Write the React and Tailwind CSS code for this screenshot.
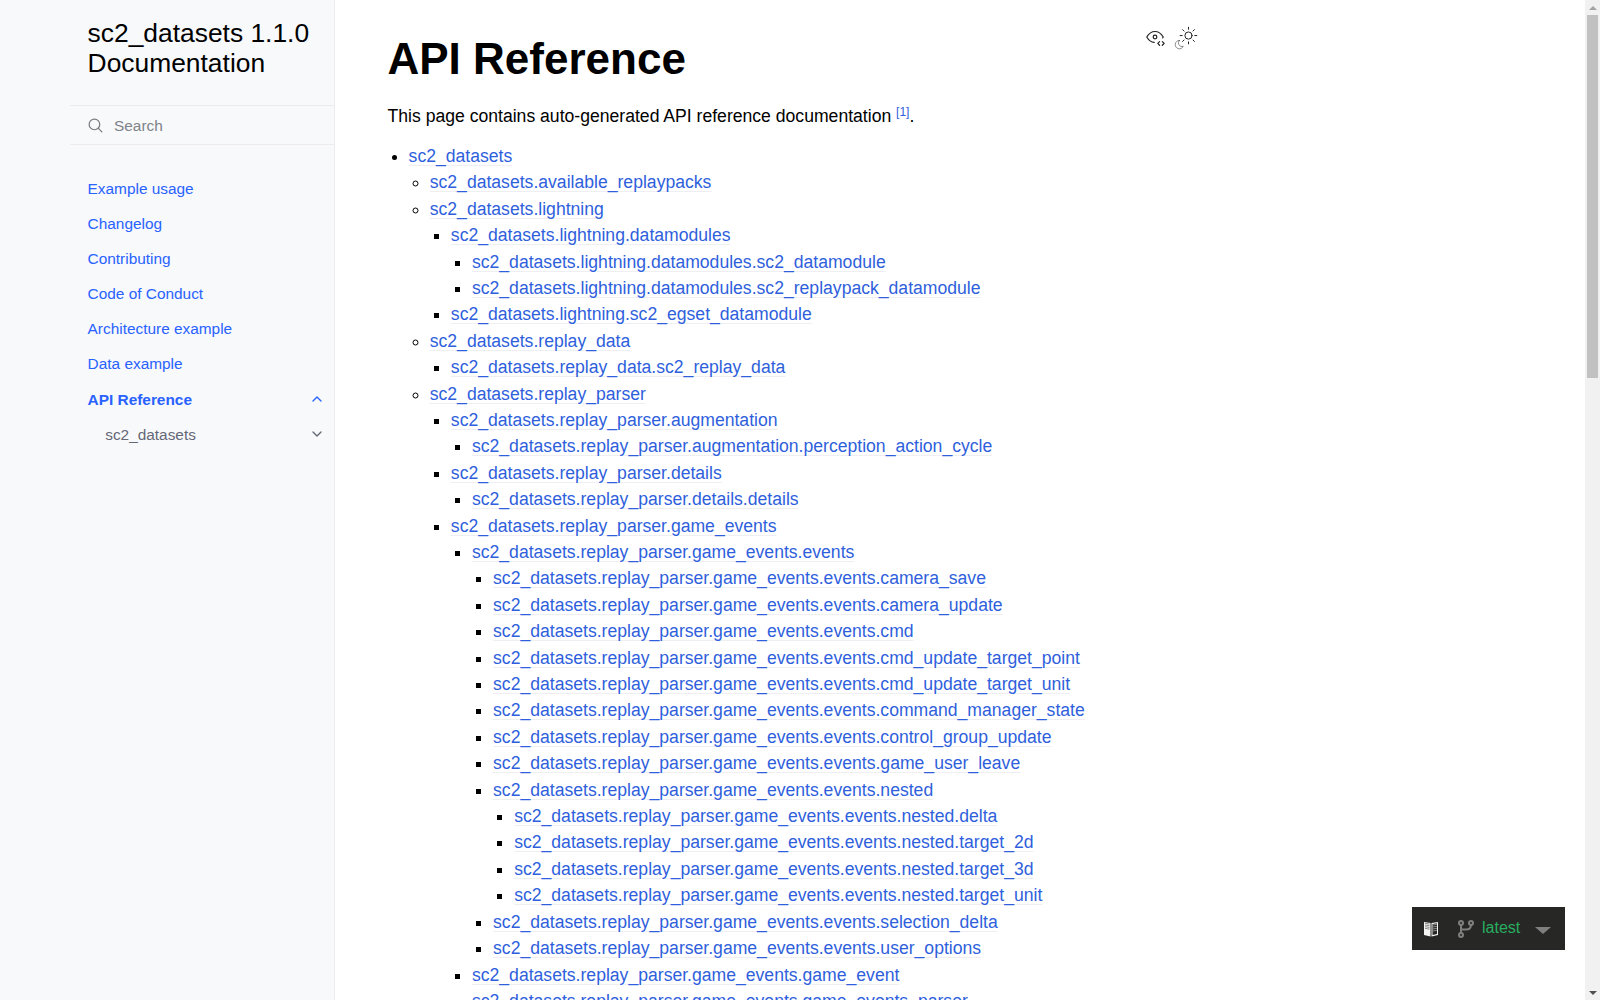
import React from "react";

const F = "sc2_datasets";
const tree = [
  [F, [
    [F + ".available_replaypacks"],
    [F + ".lightning", [
      [F + ".lightning.datamodules", [
        [F + ".lightning.datamodules.sc2_datamodule"],
        [F + ".lightning.datamodules.sc2_replaypack_datamodule"],
      ]],
      [F + ".lightning.sc2_egset_datamodule"],
    ]],
    [F + ".replay_data", [[F + ".replay_data.sc2_replay_data"]]],
    [F + ".replay_parser", [
      [F + ".replay_parser.augmentation", [[F + ".replay_parser.augmentation.perception_action_cycle"]]],
      [F + ".replay_parser.details", [[F + ".replay_parser.details.details"]]],
      [F + ".replay_parser.game_events", [
        [F + ".replay_parser.game_events.events", [
          [F + ".replay_parser.game_events.events.camera_save"],
          [F + ".replay_parser.game_events.events.camera_update"],
          [F + ".replay_parser.game_events.events.cmd"],
          [F + ".replay_parser.game_events.events.cmd_update_target_point"],
          [F + ".replay_parser.game_events.events.cmd_update_target_unit"],
          [F + ".replay_parser.game_events.events.command_manager_state"],
          [F + ".replay_parser.game_events.events.control_group_update"],
          [F + ".replay_parser.game_events.events.game_user_leave"],
          [F + ".replay_parser.game_events.events.nested", [
            [F + ".replay_parser.game_events.events.nested.delta"],
            [F + ".replay_parser.game_events.events.nested.target_2d"],
            [F + ".replay_parser.game_events.events.nested.target_3d"],
            [F + ".replay_parser.game_events.events.nested.target_unit"],
          ]],
          [F + ".replay_parser.game_events.events.selection_delta"],
          [F + ".replay_parser.game_events.events.user_options"],
        ]],
        [F + ".replay_parser.game_events.game_event"],
        [F + ".replay_parser.game_events.game_events_parser"],
      ]],
    ]],
  ]],
];

function Tree({ items, depth = 0 }) {
  const kind = depth === 0 ? "list-disc" : depth === 1 ? "list-[circle]" : "list-[square]";
  return (
    <ul className={`${kind} pl-[21.12px]`}>
      {items.map(([label, kids]) => (
        <li key={label}>
          <a className="text-[#2f5fdc] underline decoration-[#eeeef3] decoration-1 underline-offset-[3px]">{label}</a>
          {kids && <Tree items={kids} depth={depth + 1} />}
        </li>
      ))}
    </ul>
  );
}

const nav = ["Example usage", "Changelog", "Contributing", "Code of Conduct", "Architecture example", "Data example"];

function Chevron({ up, className }) {
  return (
    <svg viewBox="0 0 24 24" className={`w-[16px] h-[16px] ${className}`} fill="none" stroke="currentColor" strokeWidth="2" strokeLinecap="round" strokeLinejoin="round">
      <path d={up ? "M18 15l-6-6-6 6" : "M6 9l6 6 6-6"} />
    </svg>
  );
}

export default function App() {
  return (
    <div className="relative flex h-screen overflow-hidden bg-white text-black font-['Liberation_Sans',Arial,sans-serif]">
      <aside className="w-[335px] shrink-0 pl-[70px] bg-[#f8f9fb] border-r border-[#eeebee] flex flex-col">
        <div className="pl-[17.6px] pt-[18px] pb-[27px] pr-2 text-[26.4px] leading-[30px]">
          sc2_datasets 1.1.0<br />Documentation
        </div>
        <div className="h-[40px] pt-[1px] flex items-center pl-[17px] border-y border-[#eeebee] text-[15.4px] text-[#7f8389]">
          <svg viewBox="0 0 24 24" className="w-[17px] h-[17px] text-[#77797e] -mt-[1px]" fill="none" stroke="currentColor" strokeWidth="1.7" strokeLinecap="round">
            <circle cx="10.5" cy="10.5" r="7.5" /><path d="M21 21l-5.200-5.200" />
          </svg>
          <span className="ml-[10px]">Search</span>
        </div>
        <nav className="mt-[25.8px] text-[15.4px] text-[#2962ff]">
          {nav.map((n) => (
            <div key={n} className="h-[35.13px] flex items-center pl-[17.6px]">{n}</div>
          ))}
          <div className="h-[35.13px] flex items-center justify-between pl-[17.6px] pr-[9px] font-bold">
            API Reference
            <Chevron up />
          </div>
          <div className="h-[35.13px] flex items-center justify-between pl-[35.2px] pr-[9px] text-[#646776]">
            sc2_datasets
            <Chevron />
          </div>
        </nav>
      </aside>

      <main className="flex-1 min-w-0 overflow-hidden pl-[52.5px]">
        <div className="w-[810px] flex justify-between items-start">
          <h1 className="text-[44px] leading-[53px] font-bold mt-[32px]">API Reference</h1>
          <div className="flex items-start gap-[8px] mt-[25px] text-[#222]">
            <svg viewBox="0 0 24 24" className="w-[22px] h-[22px] mt-[1px]" fill="none" stroke="currentColor" strokeWidth="1.3" strokeLinecap="round" strokeLinejoin="round">
              <path d="M10 12a2 2 0 1 0 4 0a2 2 0 0 0 -4 0" />
              <path d="M11.110 17.958c-3.209 -.307 -5.910 -2.293 -8.110 -5.958c2.400 -4 5.400 -6 9 -6c3.600 0 6.600 2 9 6c-.210 .352 -.427 .688 -.647 1.008" />
              <path d="M20 21l2 -2l-2 -2" />
              <path d="M17 17l-2 2l2 2" />
            </svg>
            <svg viewBox="0 0 24 24" className="w-[24px] h-[24px] mt-[1px]" fill="none" stroke="currentColor" strokeWidth="1" strokeLinecap="round" strokeLinejoin="round">
              <path opacity="0.5" d="M 5.411 14.504 C 5.471 14.504 5.532 14.504 5.591 14.504 C 3.639 16.319 4.383 19.569 6.931 20.352 C 7.693 20.586 8.512 20.551 9.250 20.252 C 8.023 23.207 4.056 23.725 2.110 21.184 C 0.166 18.642 1.702 14.949 4.874 14.536 C 5.051 14.512 5.231 14.500 5.411 14.500 L 5.411 14.504 Z" />
              <line x1="14.5" y1="3.25" x2="14.5" y2="1.25" />
              <line x1="14.5" y1="15.85" x2="14.5" y2="17.85" />
              <line x1="10.044" y1="5.094" x2="8.63" y2="3.68" />
              <line x1="19" y1="14.05" x2="20.414" y2="15.464" />
              <line x1="8.2" y1="9.55" x2="6.2" y2="9.55" />
              <line x1="20.8" y1="9.55" x2="22.8" y2="9.55" />
              <line x1="10.044" y1="14.006" x2="8.63" y2="15.42" />
              <line x1="19" y1="5.05" x2="20.414" y2="3.636" />
              <circle cx="14.5" cy="9.55" r="3.6" />
            </svg>
          </div>
        </div>
        <div className="text-[17.6px] leading-[26.4px]">
          <p className="mt-[18px] mb-[13.5px]">
            This page contains auto-generated API reference documentation <sup className="text-[#2f5fdc] text-[12px]">[1]</sup>.
          </p>
          <Tree items={tree} />
        </div>
      </main>

      <div className="w-[15px] shrink-0 bg-[#f1f1f1] flex flex-col items-center">
        <div className="h-[15px] flex items-center justify-center">
          <div className="w-0 h-0 border-x-[4px] border-x-transparent border-b-[4px] border-b-[#a3a3a3]" />
        </div>
        <div className="w-[11px] h-[363px] bg-[#c1c1c1]" />
        <div className="flex-1" />
        <div className="h-[15px] flex items-center justify-center">
          <div className="w-0 h-0 border-x-[4px] border-x-transparent border-t-[4px] border-t-[#505050]" />
        </div>
      </div>

      <div className="absolute left-[1412px] top-[907px] w-[153px] h-[43px] bg-[#272725] flex items-center text-[16px]">
        <svg viewBox="0 0 14 16" className="ml-[12px] w-[14px] h-[17px]">
          <path d="M0 1.500 L6.500 2.500 V16 L0 14.500 Z" fill="#f4f4f4" />
          <path d="M7.500 2.500 L14 1.500 V14.500 L7.500 16 Z" fill="#f4f4f4" />
          <path d="M8.500 3.500 L13 2.800 V13.600 L8.500 14.600 Z" fill="#272725" />
          <path d="M1 2.800 L5.500 3.500 M1 4.500 L5.500 5.200 M1 6.200 L5.500 6.900 M1 7.900 L5.500 8.600 M8.500 4.500 L13 3.800 M8.500 6.500 L13 5.800 M8.500 8.500 L13 7.800 M8.500 10.500 L13 9.800" stroke="#8a8a8a" strokeWidth="1" fill="none" />
        </svg>
        <svg viewBox="0 0 16 18" className="ml-[20px] w-[16px] h-[18px]" fill="none" stroke="#7f7f7f" strokeWidth="2">
          <circle cx="3" cy="3" r="2" /><circle cx="13" cy="3" r="2" /><circle cx="3" cy="15" r="2" />
          <path d="M3 5v8M13 5c0 4-3 4.500-5 4.500H3" />
        </svg>
        <span className="ml-[8px] -mt-[2px] text-[#27ae60]">latest</span>
        <div className="ml-[15px] mt-[3px] w-0 h-0 border-x-[8px] border-x-transparent border-t-[7px] border-t-[#7f7f7f]" />
      </div>
    </div>
  );
}
